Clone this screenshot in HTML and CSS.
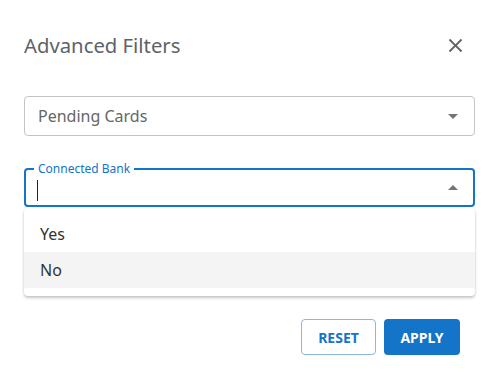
FILE: index.html
```html
<!DOCTYPE html>
<html lang="en">
<head>
    <meta charset="UTF-8">
    <meta name="viewport" content="width=device-width, initial-scale=1.0">
    <title>Advanced Filters</title>
    <link rel="stylesheet" href="styles.css">
</head>
<body>

<div class="dialog">
    <div class="dialog-header">
        <h2>Advanced Filters</h2>
        <button class="close-btn" aria-label="Close">
            <svg viewBox="0 0 24 24" width="23" height="23">
                <path d="M19 6.41L17.59 5 12 10.59 6.41 5 5 6.41 10.59 12 5 17.59 6.41 19 12 13.41 17.59 19 19 17.59 13.41 12z"/>
            </svg>
        </button>
    </div>

    <div class="field">
        <span class="field-value">Pending Cards</span>
        <span class="arrow arrow-down"></span>
    </div>

    <div class="field field-focused">
        <span class="field-label">Connected Bank</span>
        <span class="cursor"></span>
        <span class="arrow arrow-up"></span>

        <ul class="menu">
            <li>Yes</li>
            <li class="active">No</li>
        </ul>
    </div>

    <div class="actions">
        <button class="btn btn-outline">Reset</button>
        <button class="btn btn-primary">Apply</button>
    </div>
</div>

</body>
</html>
```

FILE: styles.css
```css
/* Dialog de filtros */
body {
    margin: 0;
    background-color: #fff;
    font-family: "Noto Sans", "Open Sans", sans-serif;
}
.dialog {
    padding: 31px 24px 0 24px;
}
.dialog-header {
    display: flex;
    justify-content: space-between;
    align-items: center;
    height: 28px;
}
.dialog-header h2 {
    margin: 0;
    font-size: 20.3px;
    font-weight: 400;
    line-height: 28px;
    color: #5f6368;
}
.close-btn {
    display: flex;
    padding: 0;
    margin-right: 8px;
    border: none;
    background: none;
    cursor: pointer;
}
.close-btn svg {
    fill: #5f6368;
}
.field {
    position: relative;
    display: flex;
    align-items: center;
    box-sizing: border-box;
    height: 40px;
    margin-top: 37px;
    padding: 0 16px 0 13px;
    border: 1px solid #c4c4c4;
    border-radius: 4px;
}
.field-value {
    flex: 1;
    font-size: 16px;
    color: #666;
}
.field-focused {
    height: 39px;
    margin-top: 32px;
    padding-left: 11px;
    border: 2px solid #1474c8;
}
.field-label {
    position: absolute;
    top: -9px;
    left: 8px;
    padding: 0 4px;
    background-color: #fff;
    font-size: 12px;
    line-height: 16px;
    color: #1474c8;
}
.cursor {
    width: 1px;
    height: 21px;
    margin-top: 5px;
    background-color: #222;
    margin-right: auto;
}
.arrow {
    width: 0;
    height: 0;
    border-left: 5px solid transparent;
    border-right: 5px solid transparent;
}
.arrow-down {
    border-top: 5px solid #757575;
}
.arrow-up {
    margin-right: -1px;
    border-bottom: 5px solid #757575;
}
.menu {
    position: absolute;
    top: 38px;
    left: -2px;
    right: -2px;
    margin: 0;
    padding: 8px 0;
    list-style: none;
    background-color: #fff;
    border-radius: 4px;
    box-shadow: 0 2px 3px rgba(0, 0, 0, 0.22), 0 0 2px rgba(0, 0, 0, 0.08);
}
.menu li {
    height: 36px;
    line-height: 36px;
    padding: 0 16px;
    font-size: 16px;
    color: #333;
}
.menu li.active {
    background-color: #f4f4f4;
}
.actions {
    display: flex;
    justify-content: flex-end;
    gap: 8px;
    margin-top: 112px;
    padding-right: 15px;
}
.btn {
    height: 36px;
    padding: 0 16px;
    border-radius: 4px;
    font-family: inherit;
    font-size: 14px;
    font-weight: 700;
    text-transform: uppercase;
    cursor: pointer;
}
.btn-outline {
    width: 75px;
    background-color: #fff;
    color: #1474c8;
    border: 1px solid #8ab8e2;
}
.btn-primary {
    width: 76px;
    background-color: #1474c8;
    color: #fff;
    border: none;
}
```
